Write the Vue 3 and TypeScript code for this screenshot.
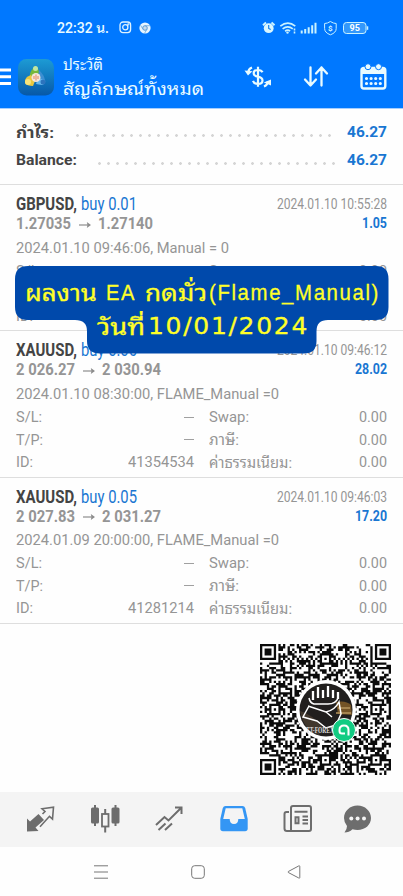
<script setup lang="ts">
interface Deal {
  symbol: string
  symbolWidth: number
  volume: string
  open: string
  close: string
  priceWidth: number
  time: string
  profit: string
  profitWidth: number
  comment: string
  commentWidth: number
  id: string
}

const deals: Deal[] = [
  { symbol: 'GBPUSD,', symbolWidth: 61, volume: 'buy 0.01', open: '1.27035', close: '1.27140', priceWidth: 55, time: '2024.01.10 10:55:28', profit: '1.05', profitWidth: 25, comment: '2024.01.10 09:46:06, Manual = 0', commentWidth: 213, id: '41356284' },
  { symbol: 'XAUUSD,', symbolWidth: 61, volume: 'buy 0.06', open: '2 026.27', close: '2 030.94', priceWidth: 59, time: '2024.01.10 09:46:12', profit: '28.02', profitWidth: 32, comment: '2024.01.10 08:30:00, FLAME_Manual =0', commentWidth: 263, id: '41354534' },
  { symbol: 'XAUUSD,', symbolWidth: 61, volume: 'buy 0.05', open: '2 027.83', close: '2 031.27', priceWidth: 59, time: '2024.01.10 09:46:03', profit: '17.20', profitWidth: 32, comment: '2024.01.09 20:00:00, FLAME_Manual =0', commentWidth: 263, id: '41281214' },
]

// Condenses or widens a text run so that it takes the given width.
const vFit = {
  mounted(el: HTMLElement, binding: { value: number }) {
    const natural = el.getBoundingClientRect().width
    if (!natural) return
    el.style.transform = `scaleX(${binding.value / natural})`
    el.style.marginRight = `${binding.value - natural}px`
  },
}

// QR symbol
const N = 57
function finder(x: number, y: number): boolean | null {
  for (const [fx, fy] of [[0, 0], [N - 7, 0], [0, N - 7]]) {
    const dx = x - fx
    const dy = y - fy
    if (dx >= -1 && dx <= 7 && dy >= -1 && dy <= 7) {
      const d = Math.max(Math.abs(dx - 3), Math.abs(dy - 3))
      return d === 3 || d <= 1
    }
  }
  for (const cx of [6, 28, 50]) {
    for (const cy of [6, 28, 50]) {
      const d = Math.max(Math.abs(x - cx), Math.abs(y - cy))
      if (d <= 2) return d !== 1
    }
  }
  if (x === 6 || y === 6) return (x + y) % 2 === 0
  return null
}
let seed = 90417
let qrPath = ''
for (let y = 0; y < N; y++) {
  for (let x = 0; x < N; x++) {
    seed = (seed * 1103515245 + 12345) % 2147483648
    const f = finder(x, y)
    if (f === null ? seed / 2147483648 > 0.49 : f) qrPath += `M${x} ${y}h1v1h-1z`
  }
}
</script>

<template>
  <div class="screen">
    <header class="top">
      <div class="status">
        <span v-fit="52" class="run clock">22:32 น.</span>
        <svg class="s-insta" width="13" height="13" viewBox="0 0 13 13" fill="none" stroke="#dff3ff" stroke-width="1.3"><rect x="1" y="1" width="10.6" height="10.6" rx="3" /><circle cx="6.3" cy="6.3" r="2.6" /><circle cx="9.3" cy="3.4" r=".4" /></svg>
        <svg class="s-chrome" width="12" height="12" viewBox="0 0 12 12"><circle cx="6" cy="6" r="5.6" fill="#e6f5ff" /><circle cx="6" cy="6" r="2.3" fill="#c8dcec" stroke="#4d91d0" stroke-width=".9" /><path d="M6 3.7h5M4 7.2 1.5 3.2M8 7.2l-2.6 4.3" stroke="#6aa8dc" stroke-width=".8" /></svg>
        <span class="grow"></span>
        <svg width="127" height="16" viewBox="0 0 127 16" fill="none" stroke="#c9f2ff">
          <circle cx="6.7" cy="8.2" r="4.9" fill="#d8f6ff" stroke="none" /><path d="M1 5.2 4 2.5M9.5 2.5l3 2.7" stroke-width="2" /><path d="M6.7 5v3.5l2 1" stroke="#0879e9" stroke-width="1.1" />
          <path d="M18.3 6.2q7.6-6 15 0M20.6 8.8q5.2-4 10.2 0M23.1 11.2q2.7-2 5 0" stroke-width="1.7" /><circle cx="25.5" cy="12.6" r="1.2" fill="#c9f2ff" stroke="none" /><path d="M32.5 8.5v2M32.5 11.5v2" stroke-width="1.6" />
          <path d="M39.7 13.5v-3M43.2 13.5V9M46.7 13.5V7.3M50.2 13.5V5.2M53.5 13.5V2.7" stroke-width="2" />
          <path d="M68.4 1.5q3 2 5.8 2v5q0 4.2-5.8 6.3-5.8-2.1-5.8-6.3v-5q2.8 0 5.8-2z" />
          <text x="65.900" y="11" class="tiny">$</text>
          <rect x="81.500" y="2.500" width="22.500" height="11" rx="3" fill="#3398fb" /><path d="M105.500 6.300v3.500" stroke-width="1.500" /><text x="87.500" y="11.200" class="bat">95</text>
        </svg>
      </div>
      <div class="bar">
        <svg class="burger" width="12" height="18" viewBox="0 0 12 18"><path d="M0 2h11M0 8.700h11M0 15.500h11" stroke="#fff" stroke-width="3" /></svg>
        <svg class="logo" width="36" height="37" viewBox="0 0 36 37">
          <defs><linearGradient id="lg" x1="0" y1="0" x2="0" y2="1"><stop offset="0" stop-color="#1d9bd4" /><stop offset="1" stop-color="#0758a8" /></linearGradient></defs>
          <rect width="36" height="36.500" rx="8.500" fill="url(#lg)" />
          <path d="M17 7q4 2 4 7l-4 4-5 1q-1-5 2.500-9z" fill="#76b83a" /><path d="M21 11q6 6 6 11l-7 1z" fill="#3c8fd2" />
          <path d="M7 22q0-4 6-6l4 6-2 5q-6 0-8-3z" fill="#e9c73e" /><path d="M20 19l7 2q1 4-3 5l-6-1z" fill="#65b6ee" />
          <circle cx="17.500" cy="9.500" r="2.500" fill="#bfe6a4" /><circle cx="10" cy="23" r="3" fill="#f6e37b" /><circle cx="25" cy="23" r="2.500" fill="#2b73bd" />
          <circle cx="18" cy="18.500" r="4.500" fill="#f4e6da" /><path d="M18 15.500v6M16 17v3M20 17v3" stroke="#e69774" stroke-width="1.200" />
        </svg>
        <div class="titles">
          <div class="line t1"><span v-fit="40" class="run">ประวัติ</span></div>
          <div class="line t2"><span v-fit="141" class="run">สัญลักษณ์ทั้งหมด</span></div>
        </div>
        <span class="grow"></span>
        <div class="actions">
          <svg width="28" height="26" viewBox="0 0 28 26" fill="none" stroke="#e9fbff" stroke-width="2.200"><path d="M18.500 8.300Q17.500 6 14 6q-4.300 0-4.300 3.200 0 2.600 4.300 3.500t4.500 3.700q0 3.400-4.500 3.400-4 0-5-3M14 2.800v20" /><path d="M8 3.500Q4.200 5 4.200 9" stroke-width="2.400" /><path d="M.5 6.500 4 11.500 8.500 7.300z" fill="#e9fbff" stroke="none" /><path d="M20 22.500q3.700-1.500 3.900-5.300" stroke-width="2.400" /><path d="M19.800 18.500 27 15.500v6z" fill="#e9fbff" stroke="none" /></svg>
          <svg width="26" height="24" viewBox="0 0 26 24" fill="none" stroke="#e9fbff" stroke-width="2.300" stroke-linecap="round" stroke-linejoin="round"><path d="M7.500 2.500v18M2 14.500l5.500 6 5.500-6M18.500 20.500v-18M13 8.500l5.500-6 5.500 6" /></svg>
          <svg width="27" height="28" viewBox="0 0 27 28"><rect x="1.500" y="5" width="23.800" height="20.500" rx="2.500" fill="none" stroke="#e9fbff" stroke-width="2.400" /><path d="M1.500 6h24v5h-24z" fill="#e9fbff" /><g stroke="#0078ff" stroke-width="1"><circle cx="8" cy="3.700" r="3" fill="#e9fbff" /><circle cx="18.500" cy="3.700" r="3" fill="#e9fbff" /></g><g stroke="#e9fbff" stroke-width="3.200" stroke-linecap="round" stroke-dasharray="0 4.600"><path d="M6.500 15.500h15M6.500 20.500h15" /></g></svg>
        </div>
      </div>
    </header>

    <section class="summary">
      <div class="line sum"><span v-fit="38" class="run thai">กำไร:</span><i class="dots d1"></i><span v-fit="40" class="run blue">46.27</span></div>
      <div class="line sum"><span v-fit="61" class="run">Balance:</span><i class="dots d2"></i><span v-fit="40" class="run blue">46.27</span></div>
    </section>

    <section v-for="d in deals" :key="d.id" class="deal">
      <div class="line head"><span v-fit="d.symbolWidth" class="run sym">{{ d.symbol }}</span><span v-fit="56" class="run vol">{{ d.volume }}</span><span class="grow"></span><span v-fit="110" class="run time">{{ d.time }}</span></div>
      <div class="line price">
        <span v-fit="d.priceWidth" class="run">{{ d.open }}</span>
        <svg class="arrow" width="12" height="8" viewBox="0 0 12 8" fill="none" stroke="#8c8c8c" stroke-width="1.200"><path d="M0 4h10" /><path d="M7.800 1 12 4 7.800 7l.7-3z" fill="#8c8c8c" stroke="none" /></svg>
        <span v-fit="d.priceWidth" class="run">{{ d.close }}</span><span class="grow"></span><span v-fit="d.profitWidth" class="run profit">{{ d.profit }}</span>
      </div>
      <div class="line comment"><span v-fit="d.commentWidth" class="run">{{ d.comment }}</span></div>
      <div class="details">
        <div class="line"><span v-fit="26" class="run">S/L:</span><i class="dash"></i></div>
        <div class="line"><span v-fit="40" class="run">Swap:</span><span v-fit="28" class="run">0.00</span></div>
        <div class="line"><span v-fit="27" class="run">T/P:</span><i class="dash"></i></div>
        <div class="line"><span v-fit="30" class="run thai">ภาษี:</span><span v-fit="28" class="run">0.00</span></div>
        <div class="line"><span v-fit="17" class="run">ID:</span><span v-fit="66" class="run">{{ d.id }}</span></div>
        <div class="line"><span v-fit="83" class="run thai">ค่าธรรมเนียม:</span><span v-fit="28" class="run">0.00</span></div>
      </div>
    </section>

    <div class="banner">
      <svg class="shape" width="374" height="88" viewBox="0 0 374 88"><path d="M13 0H361Q373.500 0 373.500 13V41Q373.500 54 361 54H313Q301.500 54 301.500 65V75Q301.500 87.500 289 87.500H85Q72 87.500 72 75V65Q72 54 60 54H13Q0 54 0 41V13Q0 0 13 0Z" fill="#0049ab" /></svg>
      <div class="b-line b1"><span v-fit="72" class="run b-thai">ผลงาน</span><span v-fit="30" class="run lat">EA</span><span v-fit="62" class="run b-thai">กดมั่ว</span><span v-fit="171" class="run lat last">(Flame_Manual)</span></div>
      <div class="b-line b2"><span v-fit="48" class="run b-thai">วันที่</span><span v-fit="161" class="run lat digits">10/01/2024</span></div>
    </div>

    <div class="qr-area">
      <svg width="131" height="131" viewBox="0 0 131 131">
        <path :d="qrPath" fill="#0b0b0b" transform="scale(2.298)" />
        <circle cx="66" cy="66" r="30" fill="#fff" />
        <circle cx="66" cy="66" r="26.500" fill="#211f1e" />
        <path d="M40 67q12 3 22 16l-3 8Q44 87 40 67z" fill="#41372d" /><path d="M76 58q10-2 15 3l1 10-14-1z" fill="#735326" /><path d="M78 64h12M76 69h15" stroke="#b5955d" stroke-width="1.500" />
        <path d="M53 56V47M58 54V43M63 54V46M68 53V42M73 54V46M78 55V48" stroke="#fff" stroke-width="2.300" />
        <path d="M49 54q1 5 5 6h14q8 0 10-6M49 62l-6 11 14 4 9 7 10-3 5-11-2-12q-4 8-13 10L48 62M66 68l6 5" fill="none" stroke="#fff" stroke-width="1.500" />
        <text x="46" y="89" class="forex" textLength="28" lengthAdjust="spacingAndGlyphs">TT-FOREX</text>
        <circle cx="84" cy="86" r="11.500" fill="#12cc83" stroke="#fff" stroke-width="1" /><path d="M88.500 91.500V86q0-4.500-4.500-4.500T79.500 86v1q0 2.500 2.500 2.500h3" fill="none" stroke="#fff" stroke-width="2" />
      </svg>
    </div>

    <nav class="tabs">
      <svg width="30" height="28" viewBox="0 0 30 28"><path d="M2 13.500 5 16.500 13.500 9 19 15l-8.500 7.500L13.500 26 2 26.500z" fill="#6d6d6d" /><path d="M17.500 9 20 6.500 17 3.800 28.500 2.200 27.500 14l-3-2.700L15 21.800" fill="none" stroke="#6d6d6d" stroke-width="1.600" /></svg>
      <svg width="30" height="28" viewBox="0 0 30 28"><g fill="#6d6d6d"><rect x="1" y="2.500" width="8" height="16" rx="1.500" /><rect x="21.500" y="2.500" width="8" height="16" rx="1.500" /><path d="M4 0h2v21H4zM24.500 0h2v21h-2zM14.200 4h2v5h-2zM14.200 22h2v5.500h-2z" /></g><rect x="12" y="9" width="6.500" height="12.500" fill="none" stroke="#6d6d6d" stroke-width="1.800" /></svg>
      <svg width="30" height="28" viewBox="0 0 30 28" fill="none" stroke="#6d6d6d" stroke-width="2"><path d="m2 20 8.500-8 4 3.500L27 3M21 2.500h6.500V9M4.500 25l7-6.500M11 25l7-6.500" /></svg>
      <svg width="30" height="28" viewBox="0 0 30 28"><path d="M6.500 1h17q2 0 2.700 2l2.500 11v9.500q0 2.700-2.700 2.700H4q-2.700 0-2.700-2.700V14L3.800 3q.700-2 2.700-2z" fill="#3496f4" /><path d="M6.700 3.200h16.600L25.800 14h-6.500q0 5-4.300 5t-4.300-5H4.200z" fill="#f4f4f4" /></svg>
      <svg width="30" height="28" viewBox="0 0 30 28" fill="none" stroke="#6d6d6d" stroke-width="2"><path d="M8 26V3q0-2 2-2h16q2 0 2 2v21q0 2-2 2H4q-2.500 0-2.500-2.500V9q0-2 2-2H6" /><path d="M11.500 6.700h13M19.500 11.500h5.500M19.500 15h5.500M19.500 18.500h5.500M12.500 12.300h3v6h-3z" /></svg>
      <svg class="chat" width="30" height="28" viewBox="0 0 30 28"><path d="M15.500.500C23 .500 29 6 29 13s-6 12-13.500 12q-2.500 0-5-.800Q7 27.500 2.500 27.500 5 24.500 5 21 2 17.500 2 13C2 6 8 .500 15.500.500z" fill="#6d6d6d" /><g fill="#f4f4f4"><circle cx="9.300" cy="13.500" r="2" /><circle cx="15.600" cy="13.500" r="2" /><circle cx="22" cy="13.500" r="2" /></g></svg>
    </nav>
    <footer class="sys">
      <svg width="14" height="14" viewBox="0 0 14 14" stroke="#777"><path d="M0 .800h14M0 7h14M0 13.200h14" /></svg>
      <svg width="14" height="14" viewBox="0 0 14 14" fill="none" stroke="#777"><rect x=".700" y=".700" width="12.600" height="12.600" rx="3" /></svg>
      <svg width="14" height="14" viewBox="0 0 14 14" fill="none" stroke="#777"><path d="M12.800 1.500v11q0 1-1 .500L1.300 7.500q-.800-.500 0-1L11.800.900q1-.400 1 .600z" /></svg>
    </footer>
  </div>
</template>

<style>
body { margin: 0; background: #fefefe; }
</style>

<style scoped>
.screen { position: relative; width: 403px; height: 896px; display: flex; flex-direction: column; overflow: hidden; background: #fefefe; font-family: Roboto, "Noto Sans Thai Looped", Loma, Garuda, Waree, "Noto Sans", sans-serif; color: #959595; }
.screen svg { display: block; flex: none; }
.run { display: inline-block; flex: none; white-space: pre; transform-origin: 0 50%; }
.thai { padding-bottom: 3px; }
.grow { flex: 1; }
.line { display: flex; align-items: center; white-space: nowrap; }

.top { height: 108px; flex: none; background: #0078ff; border-bottom: 1px solid #a5ceff; color: #e9fbff; }
.status { display: flex; align-items: center; height: 17px; padding: 19px 14px 0 57px; }
.clock { font-size: 14px; font-weight: 500; padding-bottom: 2px; }
.s-insta { margin-left: 10px; }
.s-chrome { margin-left: 7px; }
.tiny { font: bold 8px Roboto, sans-serif; fill: #d8f6ff; stroke: none; }
.bat { font: bold 9px Roboto, sans-serif; fill: #fff; stroke: none; }
.bar { display: flex; align-items: center; height: 60px; padding: 11px 16px 0 0; }
.burger { margin-right: 6px; }
.titles { margin: -3px 0 0 9px; }
.t1 { height: 22px; font-size: 15px; }
.t2 { height: 25px; font-size: 18px; }
.actions { display: flex; align-items: center; gap: 31px; }

.summary { height: 76px; flex: none; box-sizing: border-box; padding: 9px 16px 0; border-bottom: 1px solid #dedede; font-size: 15.5px; font-weight: 700; color: #444; }
.sum { height: 28px; }
.blue, .profit { color: #1976d2; }
.dots { flex: 1; height: 3px; background: radial-gradient(circle, #d5d5d5 1.1px, transparent 1.6px) 0 0 / 9px 3px; }
.d1 { margin: 6px 15px 0 19px; }
.d2 { margin: 6px 11px 0 18px; }

.deal { height: 146.3px; flex: none; box-sizing: border-box; padding: 9px 16px 0; border-bottom: 1px solid #dedede; font-size: 15px; }
.head { height: 20px; }
.sym { font-size: 17.5px; font-weight: 700; color: #444; }
.vol { font-size: 17.5px; color: #1976d2; margin-left: 4px; }
.price { height: 19px; font-size: 16.5px; font-weight: 700; }
.arrow { margin: 2px 7px 0 8px; }
.profit { font-size: 14.5px; }
.comment { height: 25px; margin: 2px 0 -.5px; }
.details { display: grid; grid-template-columns: 178px 178px; column-gap: 15px; grid-auto-rows: 22.5px; }
.details .line { justify-content: space-between; }
.dash { width: 10px; height: 1px; background: #a0a0a0; }

.banner { position: absolute; left: 15px; top: 265.5px; width: 374px; height: 88px; color: #ffff28; font-size: 22.5px; }
.shape { position: absolute; inset: 0; }
.b-line { position: relative; display: flex; align-items: center; white-space: nowrap; }
.b1 { height: 54px; padding-left: 10px; gap: 9px; }
.b2 { height: 14px; padding-left: 82px; gap: 3px; }
.b-thai { padding-bottom: 4px; -webkit-text-stroke: .3px #ffff28; }
.lat { font-family: "Liberation Sans", sans-serif; letter-spacing: 1.8px; -webkit-text-stroke: .3px #ffff28; }
.digits { font-family: "DejaVu Sans", sans-serif; letter-spacing: 1.5px; padding-bottom: 2px; }
.last { margin-left: -7px; }

.qr-area { flex: 1; display: flex; justify-content: flex-end; padding: 20px 12px 0 0; }
.forex { font: bold 8px "Liberation Serif", serif; fill: #ddd; }
.tabs { height: 55px; flex: none; display: flex; align-items: center; gap: 34.5px; box-sizing: border-box; padding: 0 0 2px 25px; background: #f4f4f4; }
.chat { margin-left: -6px; }
.sys { height: 49px; flex: none; display: flex; align-items: center; justify-content: space-between; box-sizing: border-box; padding: 0 102px 0 94px; }
</style>
